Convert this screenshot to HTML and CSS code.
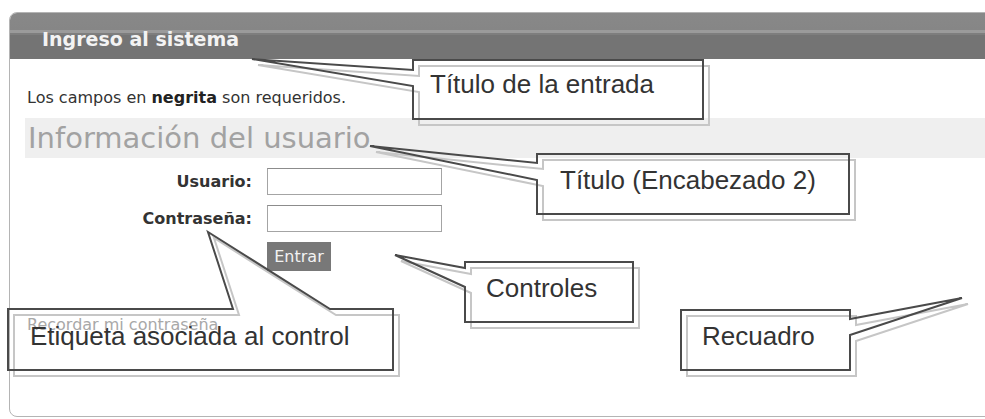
FILE: index.html
```html
<!DOCTYPE html>
<html lang="es">
<head>
<meta charset="utf-8">
<title>Ingreso al sistema</title>
<link rel="stylesheet" href="styles.css">
</head>
<body>
<div class="page">
  <div class="panel">
    <div class="panel-head">Ingreso al sistema</div>
    <div class="panel-body">
      <p class="note">Los campos en <b>negrita</b> son requeridos.</p>
      <h2 class="section">Información del usuario</h2>
      <form class="login">
        <label class="lbl" for="u">Usuario:</label>
        <input id="u" class="field" type="text">
        <label class="lbl" for="p">Contraseña:</label>
        <input id="p" class="field" type="password">
        <button class="btn" type="button">Entrar</button>
      </form>
      <a class="remember">Recordar mi contraseña</a>
    </div>
  </div>

  <svg class="overlay" width="985" height="419" viewBox="0 0 985 419">
    <g class="shade" transform="translate(6 6)">
      <polygon points="413,60 703,60 703,119 413,119 413,86 252,59 413,70"/>
      <polygon points="537,154 849,154 849,214 537,214 537,180 370,146 537,163"/>
      <polygon points="465,262 633,262 633,322 465,322 465,287 395,255 465,268"/>
      <polygon points="8,309 233,309 208,232 330,309 393,309 393,370 8,370"/>
      <polygon points="681,310 850,310 850,319 962,298 850,335 850,370 681,370"/>
    </g>
    <g class="ink">
      <polygon points="413,60 703,60 703,119 413,119 413,86 252,59 413,70"/>
      <polygon points="537,154 849,154 849,214 537,214 537,180 370,146 537,163"/>
      <polygon points="465,262 633,262 633,322 465,322 465,287 395,255 465,268"/>
      <polygon points="8,309 233,309 208,232 330,309 393,309 393,370 8,370"/>
      <polygon points="681,310 850,310 850,319 962,298 850,335 850,370 681,370"/>
    </g>
  </svg>

  <div class="callout c1">Título de la entrada</div>
  <div class="callout c2">Título (Encabezado 2)</div>
  <div class="callout c3">Controles</div>
  <div class="callout c4">Etiqueta asociada al control</div>
  <div class="callout c5">Recuadro</div>
</div>
</body>
</html>
```

FILE: styles.css
```css
html, body {
  margin: 0;
  padding: 0;
  background: #ffffff;
  overflow: hidden;
}

.page {
  position: relative;
  width: 985px;
  height: 419px;
  overflow: hidden;
  font-family: "DejaVu Sans", Verdana, sans-serif;
}

.panel {
  box-sizing: border-box;
  margin: 12px 0 0 9px;
  width: 1000px;
  height: 405px;
  border: 1px solid #b4b4b4;
  border-radius: 8px;
  overflow: hidden;
  background: #ffffff;
}

.panel-head {
  box-sizing: border-box;
  height: 46px;
  padding: 15px 0 0 32px;
  line-height: 22px;
  font-size: 19px;
  font-weight: bold;
  color: #f3f3f3;
  background: linear-gradient(to bottom,
    #888888 0, #868686 17px,
    #9b9b9b 17px, #9b9b9b 20px,
    #7e7e7e 20px, #7e7e7e 22px,
    #747474 22px, #747474 100%);
}

.panel-body {
  padding: 29px 0 0 0;
}

.note {
  margin: 0 0 0 17px;
  font-size: 16px;
  line-height: 19px;
  color: #333333;
}

.note b {
  color: #222222;
}

.section {
  margin: 11px 0 0 15px;
  height: 40px;
  padding-left: 3px;
  font-size: 29px;
  line-height: 40px;
  font-weight: normal;
  color: #a2a2a2;
  background: #efefef;
}

.login {
  display: grid;
  grid-template-columns: 242px 175px;
  column-gap: 15px;
  row-gap: 10px;
  margin: 10px 0 0 0;
}

.lbl {
  align-self: center;
  text-align: right;
  font-size: 16px;
  font-weight: bold;
  color: #333333;
}

.field {
  box-sizing: border-box;
  height: 27px;
  width: 175px;
  margin: 0;
  border: 1px solid #a4a4a4;
  border-top-color: #8c8c8c;
  background: #ffffff;
}

.btn {
  grid-column: 2;
  justify-self: start;
  box-sizing: border-box;
  width: 64px;
  height: 29px;
  margin: 0;
  padding: 0;
  border: none;
  background: #787878;
  color: #f2f2f2;
  font-family: "DejaVu Sans", Verdana, sans-serif;
  font-size: 16px;
}

.remember {
  display: block;
  margin: 44px 0 0 17px;
  font-size: 16px;
  line-height: 19px;
  color: #a8a8a8;
}

.overlay {
  position: absolute;
  left: 0;
  top: 0;
  pointer-events: none;
}

.overlay polygon {
  fill: none;
  stroke-width: 2;
  stroke-linejoin: miter;
}

.shade polygon {
  stroke: #c6c6c6;
}

.ink polygon {
  stroke: #4a4a4a;
}

.callout {
  position: absolute;
  font-family: "Liberation Sans", Arial, sans-serif;
  font-size: 26px;
  line-height: 30px;
  color: #333333;
  white-space: nowrap;
}

.c1 { left: 430px; top: 69px; }
.c2 { left: 560px; top: 165px; }
.c3 { left: 486px; top: 273px; }
.c4 { left: 30px; top: 321px; }
.c5 { left: 702px; top: 321px; }
```
